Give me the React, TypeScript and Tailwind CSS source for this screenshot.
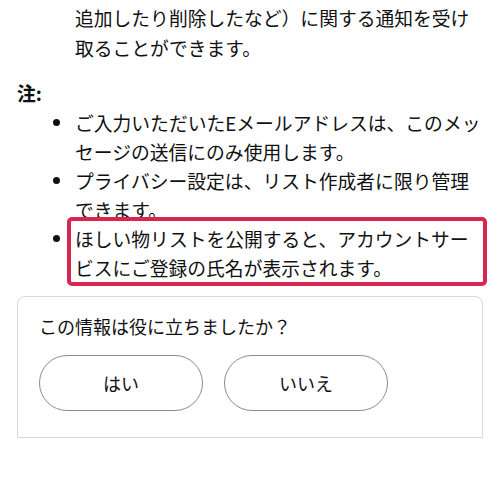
const font = "font-['Noto_Sans_CJK_JP','Noto_Sans',sans-serif]";

function Bullet({ children, highlight }: { children: React.ReactNode; highlight?: boolean }) {
  return (
    <li className="relative flex">
      <span className="flex w-[58px] shrink-0 items-start justify-end pr-[15px]">
        <span className="mt-[11px] h-[7px] w-[7px] rounded-full bg-[#0f1111]" />
      </span>
      <span className="relative block flex-1">
        {children}
        {highlight && (
          <span className="pointer-events-none absolute -top-[7px] -bottom-[4px] -left-[8px] -right-[4px] rounded-[5px] border-[4px] border-[#d9254f]" />
        )}
      </span>
    </li>
  );
}

export default function App() {
  return (
    <div className={`h-[500px] w-[500px] overflow-hidden bg-white text-[#0f1111] ${font}`}>
      <div className="px-[17px] pt-[3px]">
        <p className="pl-[58px] text-[18.8px] leading-[30px]">
          追加したり削除したなど）に関する通知を受け取ることができます。
        </p>

        <div className="mt-[15px] text-[18.8px] font-bold leading-[30px]">注:</div>

        <ul className="text-[18.8px] leading-[29px]">
          <Bullet>ご入力いただいたEメールアドレスは、このメッセージの送信にのみ使用します。</Bullet>
          <Bullet>プライバシー設定は、リスト作成者に限り管理できます。</Bullet>
          <Bullet highlight>ほしい物リストを公開すると、アカウントサービスにご登録の氏名が表示されます。</Bullet>
        </ul>

        <div className="mt-[14px] rounded-t-lg border border-[#d5d9d9] px-[21px] pb-[26px] pt-[16px]">
          <div className="text-[18px] leading-[27px]">この情報は役に立ちましたか？</div>
          <div className="mt-[15px] flex gap-[21px]">
            <button type="button" className="h-[56px] w-[164px] rounded-full border border-[#888c8c] bg-white text-[18px]">
              はい
            </button>
            <button type="button" className="h-[56px] w-[164px] rounded-full border border-[#888c8c] bg-white text-[18px]">
              いいえ
            </button>
          </div>
        </div>
      </div>
    </div>
  );
}
